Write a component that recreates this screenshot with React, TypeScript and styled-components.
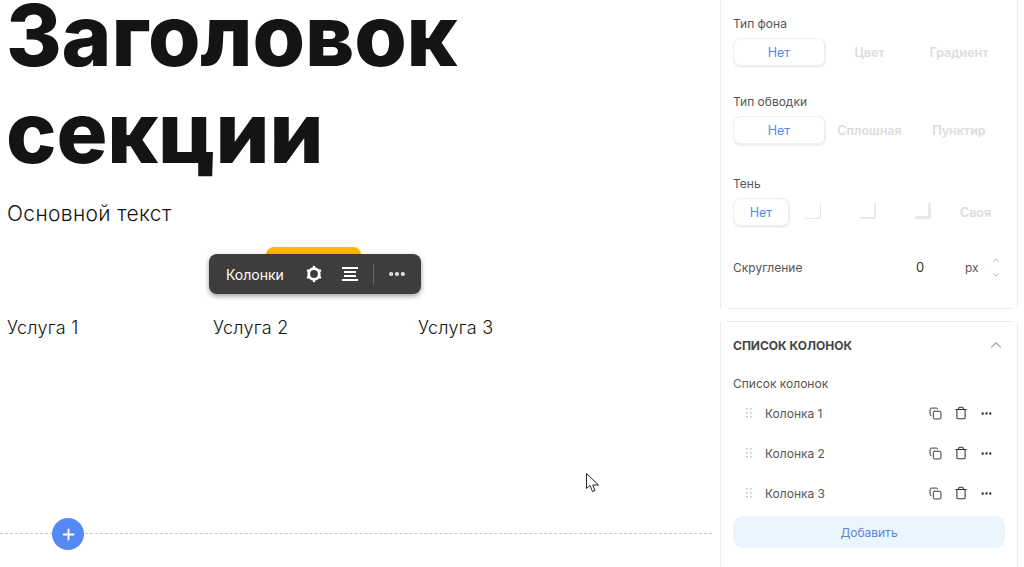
import styled, { createGlobalStyle } from "styled-components";
import { ChevronDown, ChevronUp, Copy, MoreHorizontal, Plus, Trash } from "lucide-react";

const GlobalStyle = createGlobalStyle`
  html, body {
    margin: 0;
    padding: 0;
    background: #fff;
  }
  * {
    box-sizing: border-box;
  }
`;

const Page = styled.div`
  display: flex;
  width: 1024px;
  height: 567px;
  overflow: hidden;
  background: #fff;
`;

const Main = styled.main`
  position: relative;
  flex: 0 0 712px;
  height: 567px;
  overflow: hidden;
  padding-left: 7px;
  font-family: "Inter", sans-serif;
  color: #141414;
`;

const Title = styled.h1`
  margin: -13px 0 0 -1px;
  width: 600px;
  font-size: 85px;
  line-height: 97px;
  font-weight: 800;
  letter-spacing: -0.2px;
`;

const Lead = styled.p`
  margin: 20px 0 0;
  font-size: 21px;
  line-height: 26px;
  font-weight: 300;
  letter-spacing: 0.35px;
`;

const Columns = styled.div`
  display: grid;
  grid-template-columns: 206px 205px 205px;
  margin-top: 89px;
`;

const Column = styled.div`
  font-size: 18px;
  line-height: 24px;
  font-weight: 300;
  letter-spacing: 0.3px;
`;

const Tab = styled.div`
  position: absolute;
  left: 266px;
  top: 247px;
  width: 95px;
  height: 12px;
  border-radius: 8px 8px 0 0;
  background: #ffb500;
`;

const Toolbar = styled.div`
  position: absolute;
  left: 209px;
  top: 254px;
  display: flex;
  align-items: center;
  width: 212px;
  height: 40px;
  padding-left: 17px;
  border-radius: 8px;
  background: #3f3d3c;
  box-shadow: 0 2px 5px rgba(0, 0, 0, 0.4);
  color: #fff;
  font-size: 14px;
  font-weight: 400;
`;

const ToolbarLabel = styled.span`
  width: 79px;
`;

const ToolbarIcon = styled.span`
  display: flex;
  align-items: center;
  justify-content: center;
  width: 18px;
  margin-right: 18px;
`;

const ToolbarDivider = styled.span`
  width: 1px;
  height: 20px;
  margin: 0 13px 0 -4px;
  background: #6a6866;
`;

const SectionLine = styled.div`
  position: absolute;
  left: 0;
  right: 0;
  top: 533px;
  border-top: 1px dashed #c8c8c8;
`;

const AddButton = styled.button`
  position: absolute;
  left: 52px;
  top: 518px;
  display: flex;
  align-items: center;
  justify-content: center;
  width: 32px;
  height: 32px;
  padding: 0;
  border: none;
  border-radius: 50%;
  background: #5488f5;
  color: #fff;
`;

const Cursor = styled.svg`
  position: absolute;
  left: 586px;
  top: 473px;
`;

const Sidebar = styled.aside`
  flex: 1;
  height: 567px;
  padding: 0 6px 0 8px;
  font-family: "Inter", sans-serif;
  font-size: 12px;
  color: #555;
`;

const Panel = styled.section<{ $height: number; $top: number }>`
  height: ${({ $height }) => $height}px;
  padding: ${({ $top }) => $top}px 12px 0;
  border-left: 1px solid #ececec;
  border-right: 1px solid #ececec;
`;

const Separator = styled.div`
  height: 1px;
  margin: 0 6px 0 7px;
  background: #ececec;
`;

const Gap = styled.div`
  height: 12px;
`;

const Label = styled.div<{ $top: number }>`
  margin-top: ${({ $top }) => $top}px;
  line-height: 16px;
`;

const Segments = styled.div<{ $template: string }>`
  display: grid;
  grid-template-columns: ${({ $template }) => $template};
  height: 30px;
  margin-top: 6px;
  align-items: center;
`;

const Segment = styled.div<{ $active?: boolean }>`
  display: flex;
  align-items: center;
  justify-content: center;
  height: 30px;
  font-size: 12.5px;
  font-weight: ${({ $active }) => ($active ? 400 : 600)};
  color: ${({ $active }) => ($active ? "#5488f5" : "#dcdcdc")};
  padding-bottom: 2px;
  ${({ $active }) =>
    $active &&
    `
    padding-bottom: 0;
    border: 1px solid #efefef;
    border-right-width: 2px;
    border-bottom-width: 3px;
    border-radius: 8px;
  `}
`;

const ShadowSwatch = styled.span<{ $weight: number }>`
  width: 16px;
  height: 16px;
  margin-bottom: 2px;
  border-right: ${({ $weight }) => $weight}px solid #e8e8e8;
  border-bottom: ${({ $weight }) => $weight}px solid #e8e8e8;
  border-radius: 0 0 3px 0;
`;

const RadiusRow = styled.div`
  display: flex;
  align-items: center;
  height: 24px;
  margin-top: 27px;
`;

const RadiusLabel = styled.span`
  width: 183px;
`;

const RadiusValue = styled.span`
  width: 8px;
  color: #333;
  font-size: 13px;
`;

const RadiusUnit = styled.span`
  margin-left: 41px;
`;

const Stepper = styled.span`
  display: flex;
  flex-direction: column;
  gap: 5px;
  margin-left: 12px;
  color: #a8a8a8;
`;

const ListHeader = styled.div`
  display: flex;
  align-items: center;
  justify-content: space-between;
  height: 34px;
  font-size: 12px;
  font-weight: 700;
  color: #444;
`;

const ChevronWrap = styled.span`
  display: flex;
  color: #a8a8a8;
`;

const RowList = styled.div`
  margin-top: 1px;
`;

const ListRow = styled.div`
  display: flex;
  align-items: center;
  height: 40px;
  padding-left: 12px;
`;

const RowName = styled.span`
  width: 164px;
  margin-left: 12px;
`;

const RowIcons = styled.span`
  display: flex;
  align-items: center;
  gap: 12px;
  color: #333;
`;

const AddColumn = styled.button`
  display: block;
  width: 272px;
  height: 32px;
  margin-top: 3px;
  padding: 0;
  border: none;
  border-radius: 10px;
  background: #ebf5fd;
  color: #5a84e0;
  font-family: inherit;
  font-size: 12px;
`;

function DragDots() {
  return (
    <svg width="8" height="12" viewBox="0 0 8 12" fill="#c4c4c4">
      {[1, 5].map((x) =>
        [1, 5, 9].map((y) => <rect key={`${x}-${y}`} x={x} y={y} width="1.6" height="1.6" />)
      )}
    </svg>
  );
}

function GearIcon() {
  return (
    <svg width="18" height="18" viewBox="0 0 18 18" fill="none">
      <circle cx="9" cy="9" r="5.3" stroke="#fff" strokeWidth="2.8" />
      {[0, 60, 120, 180, 240, 300].map((angle) => (
        <circle key={angle} cx="9" cy="2.1" r="1.3" fill="#fff" transform={`rotate(${angle} 9 9)`} />
      ))}
    </svg>
  );
}

const columnNames = ["Колонка 1", "Колонка 2", "Колонка 3"];

function App() {
  return (
    <>
      <GlobalStyle />
      <Page>
        <Main>
          <Title>Заголовок секции</Title>
          <Lead>Основной текст</Lead>
          <Columns>
            <Column>Услуга 1</Column>
            <Column>Услуга 2</Column>
            <Column>Услуга 3</Column>
          </Columns>
          <Tab />
          <Toolbar>
            <ToolbarLabel>Колонки</ToolbarLabel>
            <ToolbarIcon>
              <GearIcon />
            </ToolbarIcon>
            <ToolbarIcon>
              <svg width="16" height="14" viewBox="0 0 16 14" fill="#fff">
                <rect x="0" y="0" width="16" height="2" />
                <rect x="2" y="4" width="12" height="2" />
                <rect x="2" y="8" width="12" height="2" />
                <rect x="0" y="12" width="16" height="2" />
              </svg>
            </ToolbarIcon>
            <ToolbarDivider />
            <MoreHorizontal size={20} strokeWidth={3} color="#e8e8e8" />
          </Toolbar>
          <SectionLine />
          <AddButton>
            <Plus size={17} strokeWidth={2.6} />
          </AddButton>
          <Cursor width="14" height="20" viewBox="0 0 14 20">
            <path
              d="M0.5 0.5 L0.5 15.5 L4 12.5 L6.5 18.5 L9 17.5 L6.8 12 L12.5 12 Z"
              fill="#fff"
              stroke="#222"
              strokeWidth="1"
            />
          </Cursor>
        </Main>
        <Sidebar>
          <Panel $height={308} $top={16}>
            <Label $top={0}>Тип фона</Label>
            <Segments $template="93px 87px 1fr">
              <Segment $active>Нет</Segment>
              <Segment>Цвет</Segment>
              <Segment>Градиент</Segment>
            </Segments>
            <Label $top={26}>Тип обводки</Label>
            <Segments $template="93px 87px 1fr">
              <Segment $active>Нет</Segment>
              <Segment>Сплошная</Segment>
              <Segment>Пунктир</Segment>
            </Segments>
            <Label $top={30}>Тень</Label>
            <Segments $template="57px 46px 64px 46px 1fr">
              <Segment $active>Нет</Segment>
              <Segment>
                <ShadowSwatch $weight={1} />
              </Segment>
              <Segment>
                <ShadowSwatch $weight={2} />
              </Segment>
              <Segment>
                <ShadowSwatch $weight={3} />
              </Segment>
              <Segment>Своя</Segment>
            </Segments>
            <RadiusRow>
              <RadiusLabel>Скругление</RadiusLabel>
              <RadiusValue>0</RadiusValue>
              <RadiusUnit>px</RadiusUnit>
              <Stepper>
                <ChevronUp size={10} />
                <ChevronDown size={10} />
              </Stepper>
            </RadiusRow>
          </Panel>
          <Separator />
          <Gap />
          <Separator />
          <Panel $height={245} $top={6}>
            <ListHeader>
              СПИСОК КОЛОНОК
              <ChevronWrap>
                <ChevronUp size={18} strokeWidth={1.5} />
              </ChevronWrap>
            </ListHeader>
            <Label $top={14}>Список колонок</Label>
            <RowList>
              {columnNames.map((name) => (
                <ListRow key={name}>
                  <DragDots />
                  <RowName>{name}</RowName>
                  <RowIcons>
                    <Copy size={13} strokeWidth={1.8} />
                    <Trash size={14} strokeWidth={1.8} />
                    <MoreHorizontal size={13} strokeWidth={2.4} />
                  </RowIcons>
                </ListRow>
              ))}
            </RowList>
            <AddColumn>Добавить</AddColumn>
          </Panel>
        </Sidebar>
      </Page>
    </>
  );
}

export default App;
